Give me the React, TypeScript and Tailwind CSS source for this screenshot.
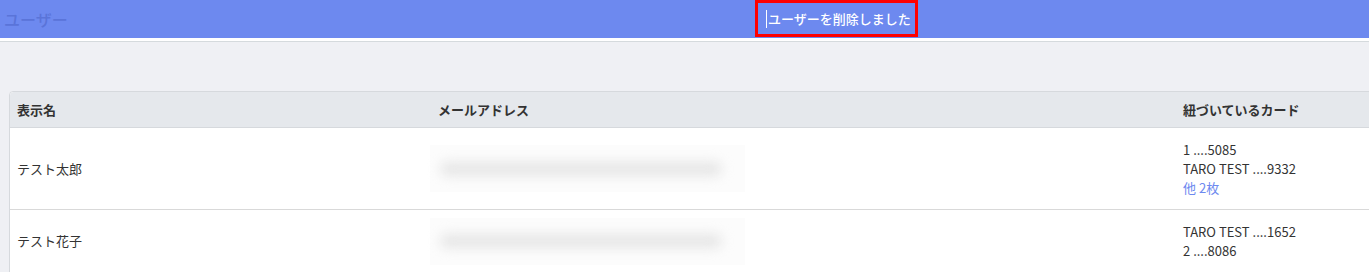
import React from "react";

const font = { fontFamily: '"Noto Sans CJK JP", "Noto Sans", sans-serif' };

type User = { name: string; cards: string[]; more?: string };

const users: User[] = [
  { name: "テスト太郎", cards: ["1 ....5085", "TARO TEST ....9332"], more: "他 2枚" },
  { name: "テスト花子", cards: ["TARO TEST ....1652", "2 ....8086"] },
];

function BlurredEmail() {
  // メールアドレスはぼかし表示
  return (
    <div className="w-[315px] h-[47px] bg-[#fcfcfc] flex items-center px-[10px]">
      <div className="h-[14px] w-[282px] bg-[#e6e6e6] blur-[6px] rounded-full" />
    </div>
  );
}

export default function App() {
  return (
    <div className="w-[1369px] h-[272px] overflow-hidden bg-[#eff0f4] text-[#333]" style={font}>
      {/* ヘッダー */}
      <div className="relative h-[38px] bg-[#6d89ef] flex items-center">
        <h1 className="pl-[4px] text-[16px] text-[#5a74d9] font-medium">ユーザー</h1>
        <div className="absolute left-[755px] top-0 w-[163px] h-[37px] border-[3px] border-[#ff0000] flex items-center pl-[8px] whitespace-nowrap">
          <span className="w-px h-[18px] bg-white mr-[1px] shrink-0" />
          <span className="text-white text-[13px] font-medium">ユーザーを削除しました</span>
        </div>
      </div>
      <div className="h-[3px] bg-white" />
      <div className="h-px bg-[#d5dadd]" />

      <div className="pt-[49px] pl-[9px]">
        <div className="border border-[#d6d9dd] rounded-tl-[4px] bg-white w-[1400px] text-[13px]">
          <div className="grid grid-cols-[420px_745px_1fr] h-[36px] items-center bg-[#e5e8ec] border-b border-[#d6d9dd] font-bold rounded-tl-[4px]">
            <div className="pl-[7px]">表示名</div>
            <div className="pl-[8px]">メールアドレス</div>
            <div className="pl-[8px]">紐づいているカード</div>
          </div>
          {users.map((u, i) => (
            <div
              key={u.name}
              className={`grid grid-cols-[420px_745px_1fr] py-[12px] items-center ${i > 0 ? "border-t border-[#d9d9d9]" : ""}`}
            >
              <div className="pl-[7px]">{u.name}</div>
              <div className="-my-[8px]">
                <BlurredEmail />
              </div>
              <div className="pl-[8px] leading-[19px]">
                {u.cards.map((c) => (
                  <div key={c}>{c}</div>
                ))}
                {u.more && <div className="text-[#6d89ef]">{u.more}</div>}
              </div>
            </div>
          ))}
        </div>
      </div>
    </div>
  );
}
